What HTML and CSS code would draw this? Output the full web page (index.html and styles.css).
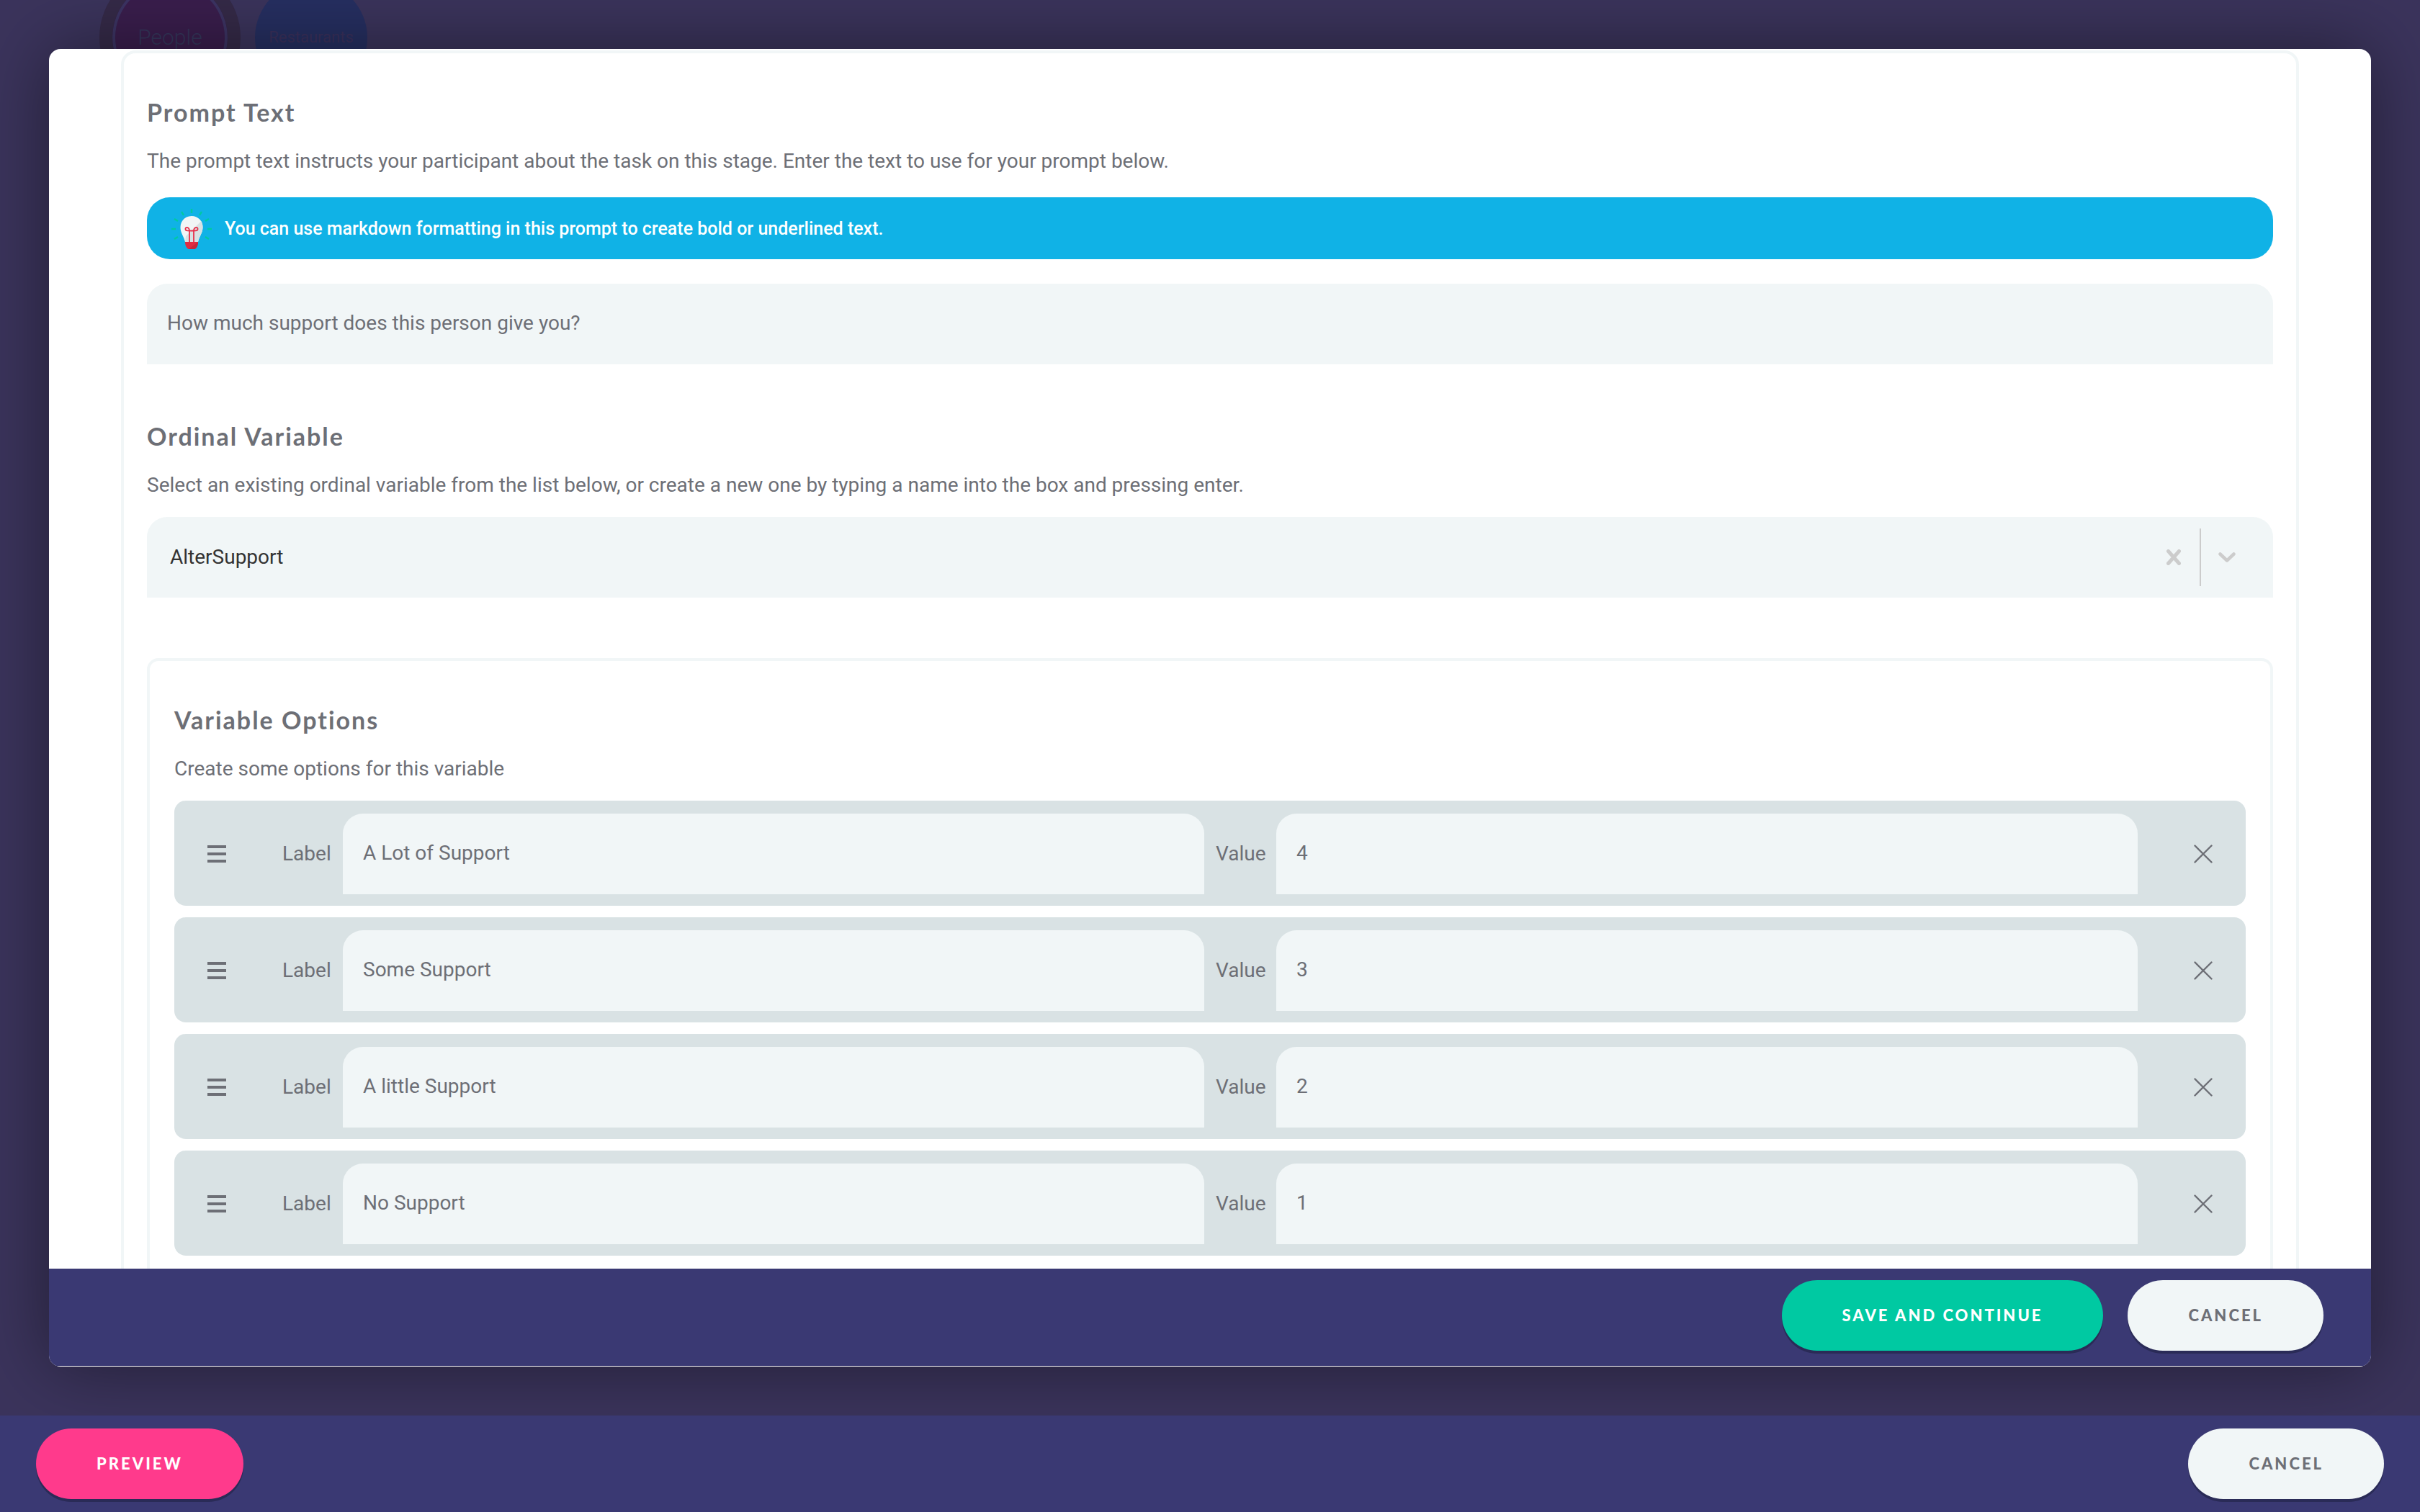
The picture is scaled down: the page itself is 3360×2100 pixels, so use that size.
FILE: index.html
```html
<!DOCTYPE html>
<html lang="en">
<head>
<meta charset="utf-8">
<meta name="viewport" content="width=device-width, initial-scale=1">
<title>Edit Prompt</title>
<link rel="stylesheet" href="styles.css">
</head>
<body>
<svg class="sprite" aria-hidden="true">
  <symbol id="icon-handle" viewBox="0 0 26 26"><path d="M0 3h26M0 13h26M0 23h26" stroke="currentColor" stroke-width="4"/></symbol>
  <symbol id="icon-close" viewBox="0 0 26 26"><path d="M1.500 1.500l23 23M24.500 1.500l-23 23" stroke="currentColor" stroke-width="2.400" stroke-linecap="round"/></symbol>
</svg>
<div class="app">
  <div class="stage">
    <div class="node node-person"><span>People</span></div>
    <div class="node node-place"><span>Restaurants</span></div>
    <form class="dialog" role="dialog" aria-label="Edit prompt">
      <div class="dialog-content">
        <section class="panel">
          <h2>Prompt Text</h2>
          <p>The prompt text instructs your participant about the task on this stage. Enter the text to use for your prompt below.</p>
          <div class="tip">
            <svg class="bulb" viewBox="0 0 56 56" aria-hidden="true">
              <path d="M28 0v6M14 4l3 5M42 4l-3 5M4 14l5 3M52 14l-5 3M0 28h6M56 28h-6M4 42l5-3M52 42l-5-3" stroke="#00c9a2" stroke-width="2.400" fill="none"/>
              <path d="M28 10C19 10 12.500 17 12.500 25.500c0 8 4.500 12 6.500 20.500h18c2-8.500 6.500-12.500 6.500-20.500C43.500 17 37 10 28 10z" fill="#f1f5f6"/>
              <path d="M41.500 17c1.300 2.500 2 5.300 2 8.500 0 8-4.500 12-6.500 20.500H19l1-8z" fill="#d9e1e3"/>
              <path d="M25 46V31c0-6-5-6-5.500-3.500C19 31 22 30.500 28 30.500s9 .5 8.500-3C36 25 31 25 31 31v15" stroke="#e8304a" stroke-width="1.800" fill="none"/>
              <path d="M19 46h18c0 5-2 9-5 10h-8c-3-1-5-5-5-10z" fill="#e22b41"/>
              <path d="M37 46c0 5-2 9-5 10h-8z" fill="#c62839"/>
            </svg>
            <span>You can use markdown formatting in this prompt to create bold or underlined text.</span>
          </div>
          <input class="text-field prompt-field" type="text" aria-label="Prompt text" value="How much support does this person give you?">

          <h2 class="next-section">Ordinal Variable</h2>
          <p>Select an existing ordinal variable from the list below, or create a new one by typing a name into the box and pressing enter.</p>
          <div class="picker">
            <select aria-label="Ordinal variable"><option>AlterSupport</option></select>
            <button type="button" class="icon-button" aria-label="Clear">
              <svg width="20" height="22" viewBox="0 0 20 22"><path d="M2.500 2.500l15 17M17.500 2.500l-15 17" stroke="currentColor" stroke-width="5" stroke-linecap="round"/></svg>
            </button>
            <span class="picker-divider"></span>
            <svg class="picker-arrow" width="24" height="14" viewBox="0 0 24 14" aria-hidden="true"><path d="M2.500 2.500l9.500 9 9.500-9" fill="none" stroke="currentColor" stroke-width="4.500" stroke-linecap="round" stroke-linejoin="round"/></svg>
          </div>

          <section class="panel options">
            <h2>Variable Options</h2>
            <p>Create some options for this variable</p>
            <ul>
              <li>
                <svg class="handle"><use href="#icon-handle"/></svg>
                <div class="pair"><label for="l1">Label</label><input class="text-field" id="l1" type="text" value="A Lot of Support"></div>
                <div class="pair"><label for="v1">Value</label><input class="text-field" id="v1" type="text" value="4"></div>
                <button type="button" class="icon-button remove" aria-label="Remove option"><svg><use href="#icon-close"/></svg></button>
              </li>
              <li>
                <svg class="handle"><use href="#icon-handle"/></svg>
                <div class="pair"><label for="l2">Label</label><input class="text-field" id="l2" type="text" value="Some Support"></div>
                <div class="pair"><label for="v2">Value</label><input class="text-field" id="v2" type="text" value="3"></div>
                <button type="button" class="icon-button remove" aria-label="Remove option"><svg><use href="#icon-close"/></svg></button>
              </li>
              <li>
                <svg class="handle"><use href="#icon-handle"/></svg>
                <div class="pair"><label for="l3">Label</label><input class="text-field" id="l3" type="text" value="A little Support"></div>
                <div class="pair"><label for="v3">Value</label><input class="text-field" id="v3" type="text" value="2"></div>
                <button type="button" class="icon-button remove" aria-label="Remove option"><svg><use href="#icon-close"/></svg></button>
              </li>
              <li>
                <svg class="handle"><use href="#icon-handle"/></svg>
                <div class="pair"><label for="l4">Label</label><input class="text-field" id="l4" type="text" value="No Support"></div>
                <div class="pair"><label for="v4">Value</label><input class="text-field" id="v4" type="text" value="1"></div>
                <button type="button" class="icon-button remove" aria-label="Remove option"><svg><use href="#icon-close"/></svg></button>
              </li>
            </ul>
          </section>
        </section>
      </div>
      <div class="dialog-actions">
        <button type="button" class="button button-save">Save and Continue</button>
        <button type="button" class="button button-plain">Cancel</button>
      </div>
    </form>
  </div>
  <footer class="app-actions">
    <button type="button" class="button button-preview">Preview</button>
    <button type="button" class="button button-plain">Cancel</button>
  </footer>
</div>
</body>
</html>
```
FILE: styles.css
```css
:root {
  --text: #6d6f76;
  --field: #f1f6f7;
  --row: #d9e2e4;
  --bar: #3a3973;
  --backdrop: #3b345c;
  --body-font: Roboto, "Liberation Sans", sans-serif;
  --heading-font: Lato, "Open Sans", sans-serif;
}

* { box-sizing: border-box; }

body {
  margin: 0;
  background: var(--backdrop);
  color: var(--text);
  font: 28px/40px var(--body-font);
}

input, select, button { font: inherit; color: inherit; }

.sprite { display: none; }

.app {
  display: grid;
  grid-template-rows: minmax(0, 1fr) auto;
  height: 100vh;
}

.stage {
  position: relative;
  display: flex;
  padding: 68px;
  overflow: hidden;
}

/* Dimmed nodes behind the dialog */
.node {
  position: absolute;
  display: grid;
  place-items: center;
  border-radius: 50%;
}

.node-person {
  top: -46px;
  left: 138px;
  width: 196px;
  height: 196px;
  border: 18px solid #352a48;
  background: #3a1e4d;
  box-shadow: inset 0 0 0 4px #3c3463;
  color: #35375c;
  font-weight: 300;
  font-size: 30px;
}

.node-place {
  top: -26px;
  left: 354px;
  width: 156px;
  height: 156px;
  background: #262f61;
  color: #3a305c;
  font-size: 22px;
}

.dialog {
  position: relative;
  flex: 1;
  display: flex;
  flex-direction: column;
  min-width: 0;
  padding-bottom: 1px;
  border-radius: 16px;
  background: #fff;
  box-shadow: 0 0 100px rgba(0, 0, 0, .44);
  overflow: hidden;
}

.dialog-content {
  flex: 1;
  min-height: 0;
  padding: 2px 100px 0;
  overflow: hidden;
}

.panel {
  padding: 62px 32px;
  border: 4px solid var(--field);
  border-radius: 20px;
}

h2 {
  margin: 0 0 28px;
  font: 700 34px/40px var(--heading-font);
  letter-spacing: 2px;
}

p { margin: 0 0 24px; }

.tip {
  display: flex;
  align-items: center;
  gap: 18px;
  height: 86px;
  margin: 30px 0 34px;
  padding: 2px 34px 0;
  border-radius: 32px;
  background: #10b2e6;
  color: #fff;
  font-size: 25px;
  font-weight: 500;
}

.bulb { width: 56px; height: 56px; }

.text-field {
  display: block;
  width: 100%;
  min-width: 0;
  height: 112px;
  padding: 0 28px 4px;
  border: 0;
  border-radius: 28px 28px 0 0;
  background: var(--field);
}

.next-section { margin-top: 80px; }

.picker {
  display: flex;
  align-items: center;
  height: 112px;
  padding-right: 52px;
  border-radius: 28px 28px 0 0;
  background: var(--field);
  color: #ccc;
}

.picker select {
  flex: 1;
  height: 112px;
  padding: 0 32px;
  border: 0;
  background: none;
  color: #333;
  appearance: none;
}

.picker-divider {
  width: 2px;
  height: 80px;
  margin: 0 24px 0 26px;
  background: #ccc;
}

.icon-button {
  display: grid;
  padding: 0;
  border: 0;
  background: none;
}

.options {
  margin-top: 84px;
  padding: 62px 34px;
  border-radius: 16px;
}

.options ul {
  display: grid;
  gap: 16px;
  margin: 0;
  padding: 0;
  list-style: none;
}

.options li {
  display: flex;
  align-items: center;
  gap: 16px;
  padding: 18px 46px 16px;
  border-radius: 16px;
  background: var(--row);
}

.handle {
  width: 26px;
  height: 26px;
  margin-right: 62px;
}

.pair {
  flex: 1;
  display: grid;
  grid-template-columns: 84px minmax(0, 1fr);
  align-items: center;
}

.remove { margin-left: 62px; }

.remove svg { width: 26px; height: 26px; }

.dialog-actions {
  display: flex;
  justify-content: flex-end;
  gap: 34px;
  padding: 16px 66px 21px;
  background: var(--bar);
}

.app-actions {
  position: relative;
  display: flex;
  justify-content: space-between;
  padding: 18px 50px;
  background: var(--bar);
}

.button {
  height: 98px;
  padding: 0 84px;
  border: 0;
  border-radius: 49px;
  box-shadow: 0 4px 0 #2a2b57;
  color: #fff;
  font: 900 22px/40px var(--heading-font);
  letter-spacing: 3px;
  text-transform: uppercase;
}

.button-save { background: #00c9a2; }
.button-preview { background: #ff3a8c; }

.button-plain {
  background: var(--field);
  color: var(--text);
}
```
